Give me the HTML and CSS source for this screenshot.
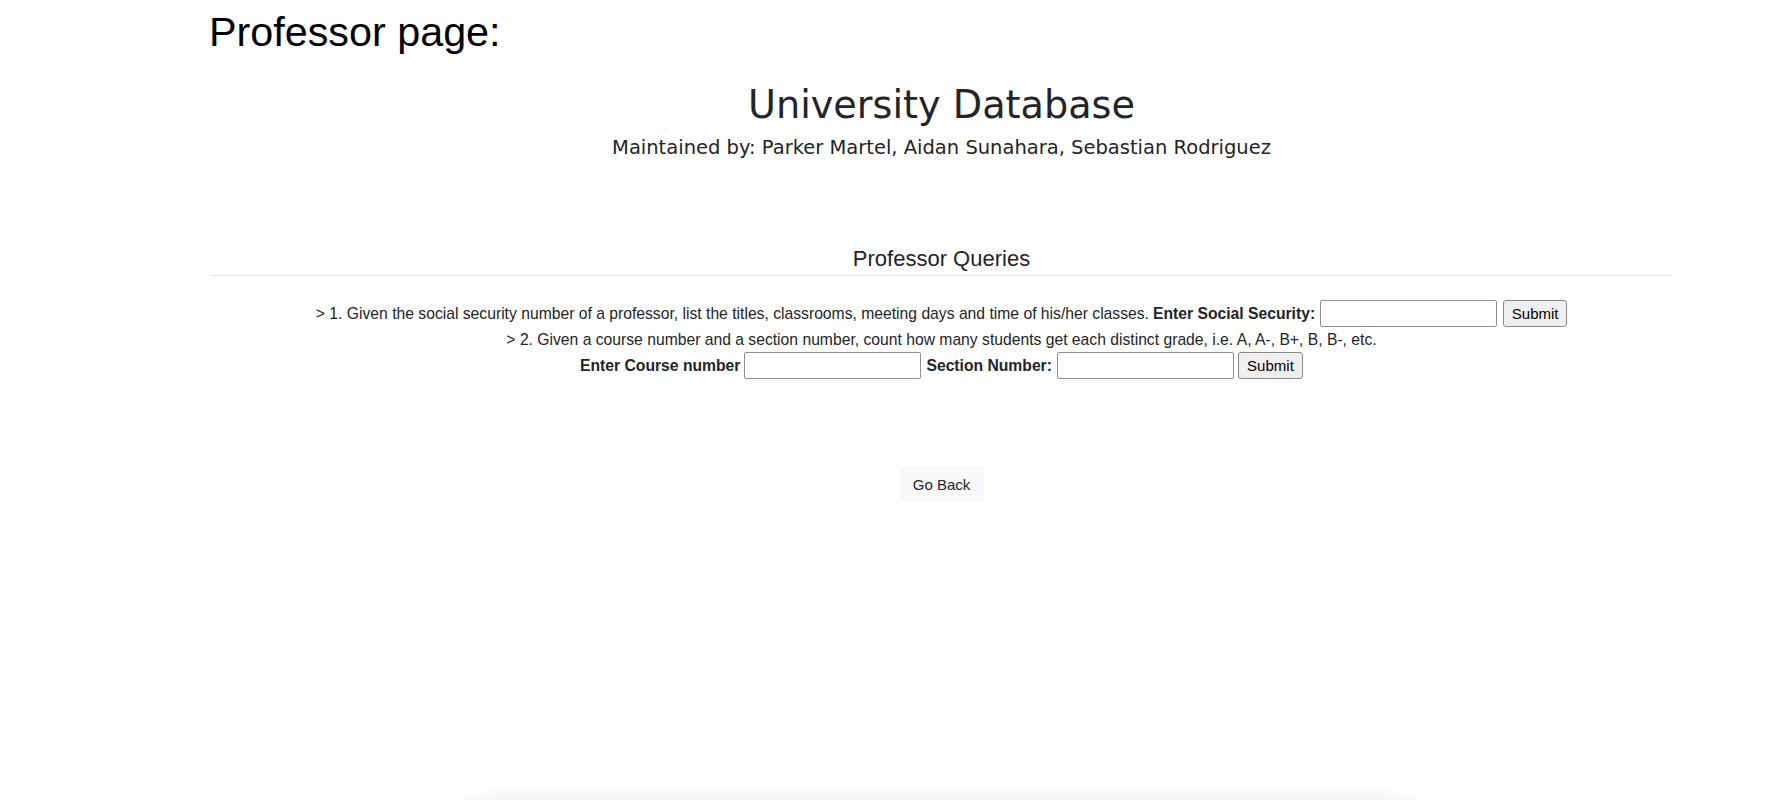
FILE: index.html
```html
<!DOCTYPE html>
<html lang="en">
<head>
<meta charset="utf-8">
<title>Professor page</title>
<link rel="stylesheet" href="styles.css">
</head>
<body>
<div class="page">
  <p class="label">Professor page:</p>
  <div class="shot">
    <header class="masthead">
      <h1 class="title">University Database</h1>
      <p class="maint">Maintained by: Parker Martel, Aidan Sunahara, Sebastian Rodriguez</p>
    </header>
    <section class="queries">
      <h2 class="qhead">Professor Queries</h2>
      <div class="rule"></div>
      <form class="qline q1">
        <span>&gt; 1. Given the social security number of a professor, list the titles, classrooms, meeting days and time of his/her classes.</span>
        <b class="lbl lbl-ssn">Enter Social Security:</b>
        <input class="field f-ssn" type="text">
        <button class="submit s1" type="button">Submit</button>
      </form>
      <p class="qtext">&gt; 2. Given a course number and a section number, count how many students get each distinct grade, i.e. A, A-, B+, B, B-, etc.</p>
      <form class="qline q3">
        <b class="lbl">Enter Course number</b>
        <input class="field f-course" type="text">
        <b class="lbl lbl-sec">Section Number:</b>
        <input class="field f-sec" type="text">
        <button class="submit s3" type="button">Submit</button>
      </form>
    </section>
    <div class="back-row"><button class="back" type="button">Go Back</button></div>
  </div>
  <div class="shadow"></div>
</div>
</body>
</html>
```
FILE: styles.css
```css
html, body {
  margin: 0;
  padding: 0;
  background: #ffffff;
  overflow: hidden;
}
.page {
  height: 800px;
  display: flex;
  flex-direction: column;
}
.label {
  margin: 0 0 0 209px;
  padding-top: 8px;
  font-family: "Liberation Sans", Arial, sans-serif;
  font-size: 41.3px;
  line-height: 48px;
  color: #000;
}
.shot {
  margin-left: 211px;
  width: 1461px;
  text-align: center;
  color: #212529;
}
.masthead {
  font-family: "DejaVu Sans", Verdana, sans-serif;
}
.title {
  margin: 26px 0 0 0;
  font-size: 38.2px;
  font-weight: normal;
  line-height: 46px;
}
.maint {
  margin: 8px 0 0 0;
  font-size: 19.5px;
  line-height: 23px;
}
.queries {
  font-family: "Liberation Sans", Arial, sans-serif;
  font-size: 15.7px;
}
.qhead {
  margin: 87px 0 0 0;
  font-size: 22px;
  font-weight: normal;
  line-height: 26px;
}
.rule {
  margin-top: 3px;
  height: 1px;
  background: #e6e6e6;
}
.qline {
  display: flex;
  justify-content: center;
  align-items: center;
  height: 27px;
  margin: 0;
}
.q1 { margin-top: 24px; }
.q3 { margin-top: 3px; }
.qtext {
  margin: 4px 0 0 0;
  line-height: 18px;
}
.lbl { font-weight: bold; }
.lbl-ssn { margin-left: 4px; }
.lbl-sec { margin-left: 5px; }
.field {
  box-sizing: border-box;
  width: 177px;
  height: 27px;
  margin: 0 0 0 5px;
  padding: 0 4px;
  border: 1px solid #8f8f8f;
  border-radius: 2px;
  background: #fff;
  font-family: "Liberation Sans", Arial, sans-serif;
  font-size: 15px;
}
.f-course { margin-left: 4px; }
.submit {
  box-sizing: border-box;
  height: 27px;
  width: 64px;
  margin: 0 0 0 6px;
  padding: 0;
  border: 1px solid #8a8a8a;
  border-radius: 3px;
  background: #efefef;
  color: #000;
  font-family: "Liberation Sans", Arial, sans-serif;
  font-size: 15px;
}
.s3 { margin-left: 4px; width: 65px; }
.back-row {
  margin-top: 87px;
  display: flex;
  justify-content: center;
}
.back {
  box-sizing: border-box;
  width: 84px;
  height: 36px;
  padding: 0;
  border: none;
  border-radius: 4px;
  background: #f8f9fa;
  color: #212529;
  font-family: "Liberation Sans", Arial, sans-serif;
  font-size: 15px;
}
.shadow {
  margin: auto 0 0 440px;
  width: 1000px;
  height: 12px;
  background:
    linear-gradient(to right, #fff 0, rgba(255,255,255,0) 6%, rgba(255,255,255,0) 94%, #fff 100%),
    linear-gradient(to bottom, rgba(244,244,244,0), rgba(242,242,242,0.9));
}
```
